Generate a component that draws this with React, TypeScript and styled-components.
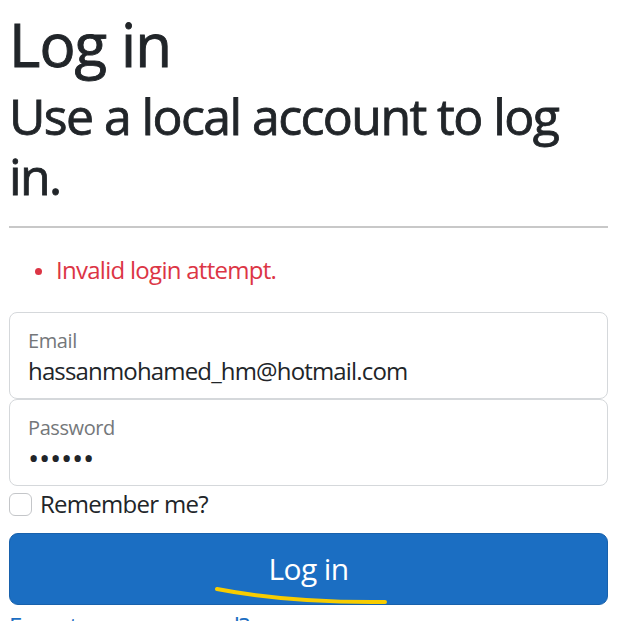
import React from "react";
import styled, { createGlobalStyle } from "styled-components";

const Global = createGlobalStyle`
  html, body { margin: 0; padding: 0; background: #fff; }
  body {
    font-family: "Open Sans", "Noto Sans", "Liberation Sans", sans-serif;
    color: #212529;
    font-size: 24px;
    line-height: 1.5;
    letter-spacing: -0.03em;
  }
  * { box-sizing: border-box; }
`;

const Page = styled.main`
  padding: 8px 14px 0 9px;
  display: flex;
  flex-direction: column;
`;

const Title = styled.h1`
  margin: 0 0 6px;
  font-size: 60px;
  font-weight: 400;
  line-height: 1.2;
  letter-spacing: -0.015em;
  -webkit-text-stroke: 0.9px #212529;
`;

const Subtitle = styled.h2`
  margin: 0;
  font-size: 50px;
  font-weight: 400;
  line-height: 1.2;
  letter-spacing: -0.032em;
  -webkit-text-stroke: 0.8px #212529;
`;

const Rule = styled.hr`
  margin: 20px 0 24px;
  border: 0;
  border-top: 2px solid #c8c8c8;
`;

const Errors = styled.ul`
  margin: 0 0 24px;
  padding-left: 47px;
  color: #dc3545;
  font-size: 24px;
  line-height: 36px;
  li::marker { font-size: 20px; }
`;

const FieldStack = styled.div`
  display: flex;
  flex-direction: column;
`;

const Floating = styled.div`
  height: 87px;
  border: 1px solid #d5d8db;
  border-radius: 8px;
  background: #fff;
  padding: 0 18px;
  display: flex;
  flex-direction: column;
`;

const FloatLabel = styled.label`
  display: block;
  margin-top: 16px;
  font-size: 20px;
  line-height: 24px;
  color: #74777a;
  letter-spacing: -0.02em;
`;

const FieldInput = styled.input<{ $secret?: boolean }>`
  border: 0;
  outline: none;
  padding: 0;
  margin: 0;
  background: transparent;
  font-family: inherit;
  font-size: ${(p) => (p.$secret ? "30px" : "24px")};
  letter-spacing: ${(p) => (p.$secret ? "-0.01em" : "-0.035em")};
  line-height: 36px;
  height: 36px;
  color: #212529;
  width: 100%;
`;

const CheckRow = styled.div`
  display: flex;
  align-items: center;
  gap: 8px;
  margin-top: 1px;
  height: 34px;
`;

const Box = styled.span`
  width: 23px;
  height: 23px;
  border: 1px solid #c4c6c9;
  border-radius: 6px;
  background: #fff;
  flex: none;
`;

const CheckLabel = styled.span`
  font-size: 24px;
  line-height: 34px;
`;

const ButtonWrap = styled.div`
  position: relative;
  margin-top: 12px;
`;

const PrimaryButton = styled.button`
  display: block;
  width: 100%;
  height: 72px;
  border: 1px solid #1861ac;
  border-radius: 9px;
  background: #1b6ec2;
  color: #fff;
  font-family: inherit;
  font-size: 30px;
  letter-spacing: -0.02em;
  line-height: 45px;
  padding: 0 0 2px;
  cursor: pointer;
`;

const Squiggle = styled.svg`
  position: absolute;
  left: 0;
  top: 0;
  width: 100%;
  height: 100%;
  pointer-events: none;
  overflow: visible;
`;

const LinkRow = styled.p`
  margin: 3px 0 0;
  font-size: 24px;
  line-height: 36px;
`;

const Link = styled.a`
  color: #1b6ec2;
  text-decoration: none;
`;

export default function App() {
  return (
    <>
      <Global />
      <Page>
        <Title>Log in</Title>
        <Subtitle>Use a local account to log in.</Subtitle>
        <Rule />
        <Errors>
          <li>Invalid login attempt.</li>
        </Errors>
        <FieldStack>
          <Floating>
            <FloatLabel htmlFor="email">Email</FloatLabel>
            <FieldInput id="email" type="text" readOnly value="hassanmohamed_hm@hotmail.com" />
          </Floating>
          <Floating>
            <FloatLabel htmlFor="pw">Password</FloatLabel>
            <FieldInput id="pw" type="password" readOnly value="abcdef" $secret />
          </Floating>
        </FieldStack>
        <CheckRow>
          <Box />
          <CheckLabel>Remember me?</CheckLabel>
        </CheckRow>
        <ButtonWrap>
          <PrimaryButton type="button">Log in</PrimaryButton>
          <Squiggle viewBox="0 0 599 72" preserveAspectRatio="none">
            <path d="M208 56 Q 280 70 376 69" stroke="#f7cc00" strokeWidth="4" fill="none" strokeLinecap="round" />
          </Squiggle>
        </ButtonWrap>
        <LinkRow>
          <Link href="#">Forgot your password?</Link>
        </LinkRow>
      </Page>
    </>
  );
}
